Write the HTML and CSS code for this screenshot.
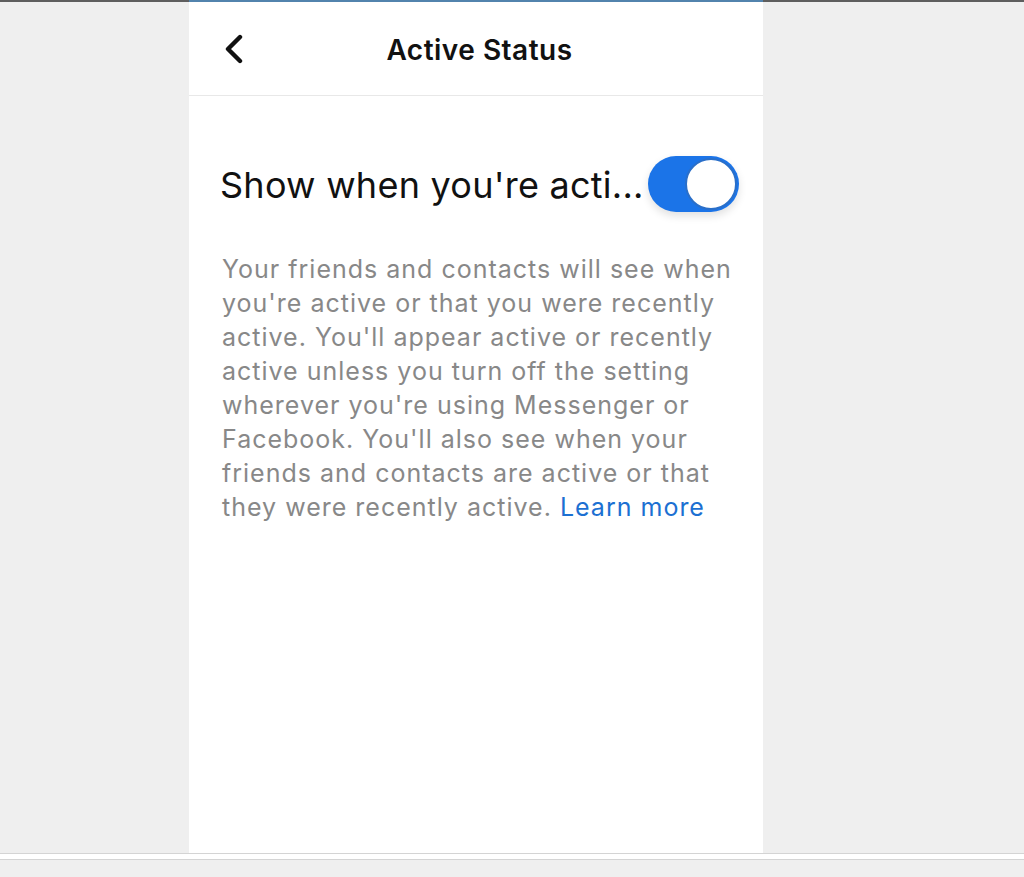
FILE: index.html
```html
<!DOCTYPE html>
<html lang="en">

<head>
    <meta charset="UTF-8">
    <meta name="viewport" content="width=device-width, initial-scale=1.0">
    <title>Active Status</title>
    <link rel="stylesheet" href="styles.css">
</head>

<body>
    <div class="page">
        <div class="panel">
            <div class="header">
                <button class="back" aria-label="Back">
                    <svg width="20" height="30" viewBox="0 0 20 30">
                        <path d="M16 3 L4 15 L16 27" fill="none" stroke="#111" stroke-width="4.4"
                            stroke-linecap="round" stroke-linejoin="round" />
                    </svg>
                </button>
                <h1>Active Status</h1>
            </div>

            <div class="content">
                <div class="setting-row">
                    <h2>Show when you're acti...</h2>
                    <div class="toggle">
                        <span class="knob"></span>
                    </div>
                </div>
                <p class="description">
                    Your friends and contacts will see when you're active or that you were recently
                    active. You'll appear active or recently active unless you turn off the setting
                    wherever you're using Messenger or Facebook. You'll also see when your friends and
                    contacts are active or that they were recently active. <a href="#">Learn more</a>
                </p>
            </div>
        </div>
        <div class="footer"></div>
    </div>
</body>

</html>
```

FILE: styles.css
```css
/* Reset styles */
* {
    margin: 0;
    padding: 0;
    box-sizing: border-box;
}

body {
    font-family: Inter, "Liberation Sans", Arial, sans-serif;
    background: #efefef;
    color: #111;
}

.page {
    border-top: 2px solid #5e5e5e;
    min-height: 877px;
}

.panel {
    margin-top: -2px;
    margin-left: 189px;
    width: 574px;
    height: 853px;
    background: white;
    border-top: 2px solid #5283ad;
}

/* Top bar */
.header {
    height: 94px;
    border-bottom: 1px solid #e8e8e8;
    display: flex;
    align-items: center;
    justify-content: center;
    position: relative;
}

.back {
    position: absolute;
    left: 35px;
    top: 32px;
    background: none;
    border: none;
    cursor: pointer;
    display: flex;
}

.header h1 {
    font-size: 28px;
    font-weight: 600;
    letter-spacing: 0.5px;
    margin-top: 2px;
    margin-left: 7px;
}

.content {
    padding: 60px 0 0 31px;
}

.setting-row {
    display: flex;
    align-items: center;
    justify-content: space-between;
    height: 56px;
    padding-right: 24px;
}

.setting-row h2 {
    font-size: 36px;
    font-weight: 400;
    letter-spacing: 0.25px;
    white-space: nowrap;
    margin-top: 2px;
}

/* Switch */
.toggle {
    width: 91px;
    height: 56px;
    border-radius: 28px;
    background: #1b74e8;
    display: flex;
    align-items: center;
    justify-content: flex-end;
    padding-right: 2px;
    box-shadow: 0 4px 8px rgba(0, 0, 0, 0.12);
    flex-shrink: 0;
}

.knob {
    width: 52px;
    height: 52px;
    border-radius: 50%;
    background: white;
    border: 2px solid #2a6fc9;
}

.description {
    margin-top: 40px;
    font-size: 25px;
    letter-spacing: 1px;
    line-height: 34px;
    color: #888;
    padding: 0 18px 0 2px;
}

.description a {
    color: #1c70d2;
    text-decoration: none;
}

.footer {
    height: 7px;
    background: white;
    border-top: 1px solid #d4d4d4;
    border-bottom: 1px solid #d4d4d4;
}
```
